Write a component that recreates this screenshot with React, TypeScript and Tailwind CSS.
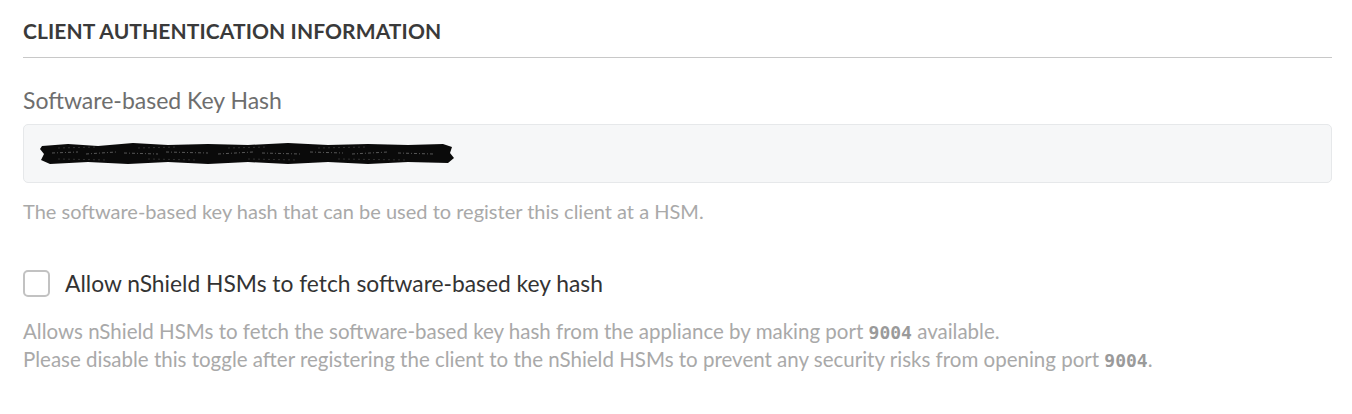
import React from "react";

function Redaction() {
  return (
    <svg width="418" height="26" viewBox="0 0 418 26" className="block">
      <path
        d="M4 5 L30 3 L60 5 L95 2 L130 4 L170 3 L210 4 L250 2 L290 4 L330 3 L370 4 L405 3 L414 6 L412 12 L416 17 L410 22 L370 21 L330 23 L290 21 L250 23 L210 21 L170 23 L130 21 L90 23 L50 21 L12 23 L3 19 L6 13 L2 8 Z"
        fill="#0a0a0a"
      />
      <path
        d="M14 12 L40 11 M48 13 L78 11 M86 12 L120 13 M128 11 L170 12 M180 13 L215 11 M224 12 L262 13 M272 11 L305 12 M314 13 L350 11 M360 12 L395 13"
        stroke="#6b6b6b"
        strokeWidth="0.8"
        fill="none"
        strokeDasharray="3 2 1 2"
      />
      <path
        d="M20 7 L60 6 M100 7 L140 6 M190 7 L230 6 M280 7 L330 6 M20 18 L70 19 M110 18 L160 19 M210 18 L260 19 M300 18 L370 19"
        stroke="#4a4a4a"
        strokeWidth="0.6"
        fill="none"
        strokeDasharray="2 3"
      />
    </svg>
  );
}

export default function App() {
  const font = { fontFamily: "Lato, 'Open Sans', sans-serif" };
  const mono = { fontFamily: "'DejaVu Sans Mono', monospace", fontSize: "18px" };
  return (
    <div className="w-[1352px] h-[414px] bg-white" style={font}>
      <div className="pl-[23px] pr-[20px] pt-[18px]">
        <div className="border-b border-[#c8c8c8] pb-[13px]">
          <h2 className="text-[21px] leading-[26px] font-bold text-[#3a3a3a] tracking-[0.1px]">
            CLIENT AUTHENTICATION INFORMATION
          </h2>
        </div>
        <div className="mt-[29px] text-[23px] leading-[26px] text-[#6e6e6e]">
          Software-based Key Hash
        </div>
        <div className="mt-[11px] h-[59px] rounded-[5px] border border-[#e6e8ea] bg-[#f6f7f8] flex items-center pl-[14px]">
          <Redaction />
        </div>
        <div className="mt-[17px] text-[20px] leading-[22px] text-[#a9a9a9]">
          The software-based key hash that can be used to register this client at a HSM.
        </div>
        <div className="mt-[48px] flex items-center gap-[15px]">
          <div className="w-[27px] h-[27px] rounded-[5px] border-2 border-[#c2c2c2] bg-white" />
          <span className="text-[22.8px] leading-[27px] text-[#333333]">
            Allow nShield HSMs to fetch software-based key hash
          </span>
        </div>
        <div className="mt-[21px] text-[20.5px] leading-[27px] text-[#a9a9a9]">
          <div>
            Allows nShield HSMs to fetch the software-based key hash from the appliance by making port{" "}
            <span className="font-bold text-[#9a9a9a]" style={mono}>9004</span>{" "}
            available.
          </div>
          <div>
            Please disable this toggle after registering the client to the nShield HSMs to prevent any security risks from opening port{" "}
            <span className="font-bold text-[#9a9a9a]" style={mono}>9004</span>.
          </div>
        </div>
      </div>
    </div>
  );
}
